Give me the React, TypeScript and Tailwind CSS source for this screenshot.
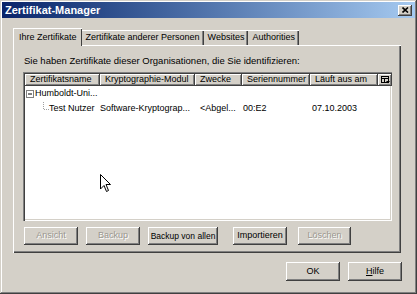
const raised =
  "shadow-[inset_-1px_-1px_0_#404040,inset_1px_1px_0_#ffffff,inset_-2px_-2px_0_#808080]";
const sunken =
  "shadow-[inset_1px_1px_0_#808080,inset_2px_2px_0_#404040,inset_-1px_-1px_0_#ffffff,inset_-2px_-2px_0_#d4d0c8]";

function Btn({ label, w, disabled, className = "" }: { label: React.ReactNode; w: string; disabled?: boolean; className?: string }) {
  return (
    <div
      className={`${w} flex items-center justify-center whitespace-nowrap bg-[#d4d0c8] ${raised} ${
        disabled ? "text-[#9a978f] [text-shadow:1px_1px_0_#ffffff]" : "text-black"
      } ${className}`}
    >
      {label}
    </div>
  );
}

function Tab({ label, active }: { label: string; active?: boolean }) {
  if (active) {
    return (
      <div className="relative z-10 h-[18px] -mb-[1px] px-[5px] flex items-center bg-[#d4d0c8] border-l border-t border-white shadow-[inset_-1px_0_0_#404040]">
        {label}
      </div>
    );
  }
  return (
    <div className="h-[15px] mt-[2px] px-[4px] flex items-center whitespace-nowrap border-t border-white shadow-[inset_-1px_0_0_#404040,inset_-2px_0_0_#808080]">
      {label}
    </div>
  );
}

const cols = [
  { label: "Zertifikatsname", w: "w-[75px]" },
  { label: "Kryptographie-Modul", w: "w-[95px]" },
  { label: "Zwecke", w: "w-[47px]" },
  { label: "Seriennummer", w: "w-[68px]" },
  { label: "Läuft aus am", w: "w-[68px]" },
];

export default function App() {
  return (
    <div className="w-[417px] h-[294px] bg-[#d4d0c8] font-['Liberation_Sans',Arial,sans-serif] text-[9px] text-black p-[2px] shadow-[inset_-1px_-1px_0_#404040,inset_1px_1px_0_#d4d0c8,inset_-2px_-2px_0_#808080,inset_2px_2px_0_#ffffff] relative overflow-hidden">
      {/* title bar */}
      <div className="h-[16px] flex items-center justify-between pl-[3px] pr-[3px] bg-gradient-to-r from-[#0a246a] to-[#a6caf0]">
        <span className="text-white font-bold text-[11px]">Zertifikat-Manager</span>
        <div className={`w-[14px] h-[11px] bg-[#d4d0c8] ${raised} flex items-center justify-center`}>
          <svg width="7" height="6" viewBox="0 0 7 6">
            <path d="M0.5 0.5 L6 5.5 M6 0.5 L0.5 5.5" stroke="#000" strokeWidth="1.6" />
          </svg>
        </div>
      </div>

      {/* tabs */}
      <div className="flex items-start mt-[10px] ml-[11px]">
        <Tab label="Ihre Zertifikate" active />
        <Tab label="Zertifikate anderer Personen" />
        <Tab label="Websites" />
        <Tab label="Authorities" />
      </div>

      {/* tab panel */}
      <div className="ml-[11px] w-[388px] h-[208px] border-l border-t border-white shadow-[inset_-1px_-1px_0_#404040,inset_-2px_-2px_0_#808080] pt-[10px] pl-[9px]">
        <div className="pl-[1px] h-[16px] leading-[10px] text-[9.5px]">
          Sie haben Zertifikate dieser Organisationen, die Sie identifizieren:
        </div>
        <div className={`w-[369px] h-[149px] bg-white p-[2px] ${sunken} relative`}>
          <div className="flex h-[12px]">
            {cols.map((c) => (
              <div
                key={c.label}
                className={`${c.w} h-[12px] shrink-0 bg-[#d4d0c8] ${raised} flex items-center pl-[5px] whitespace-nowrap overflow-hidden`}
              >
                {c.label}
              </div>
            ))}
            <div className={`w-[14px] h-[12px] shrink-0 bg-[#d4d0c8] ${raised} flex items-center justify-center`}>
              <svg width="9" height="8" viewBox="0 0 9 8">
                <rect x="0.5" y="0.5" width="7" height="6" fill="none" stroke="#000" />
                <path d="M0.5 2.5 H7.5 M3.5 2.5 V6.5" stroke="#000" />
                <path d="M5 5 H9 L7 7.5 Z" fill="#000" />
              </svg>
            </div>
          </div>
          <div className="flex items-center h-[16px] pl-[1px]">
            <svg width="8" height="8" viewBox="0 0 8 8" className="mr-[1px]">
              <rect x="0.5" y="0.5" width="7" height="7" fill="#fff" stroke="#808080" />
              <path d="M2 4 H6" stroke="#000" />
            </svg>
            <span>Humboldt-Uni...</span>
          </div>
          <div className="flex items-center h-[14px] whitespace-nowrap">
            <svg width="24" height="14" viewBox="0 0 24 14" className="shrink-0">
              <path d="M18.5 0 V7.5 H24" stroke="#a0a0a0" strokeDasharray="1 1" fill="none" />
            </svg>
            <span className="w-[51px] shrink-0">Test Nutzer</span>
            <span className="w-[100px] shrink-0">Software-Kryptograp...</span>
            <span className="w-[43px] shrink-0">&lt;Abgel...</span>
            <span className="w-[69px] shrink-0">00:E2</span>
            <span>07.10.2003</span>
          </div>
          {/* mouse cursor */}
          <svg width="12" height="19" viewBox="0 0 12 19" className="absolute left-[77px] top-[102px]">
            <path
              d="M0.5 0.5 V15 L4 11.5 L6.5 17.5 L8.5 16.5 L6 10.5 H10.5 Z"
              fill="#fff"
              stroke="#000"
              strokeWidth="1"
            />
          </svg>
        </div>
        <div className="flex mt-[6px] pl-[1px]">
          <Btn label="Ansicht" w="w-[54px] h-[18px]" disabled />
          <Btn label="Backup" w="w-[54px] h-[18px]" disabled className="ml-[8px]" />
          <Btn label="Backup von allen" w="w-[70px] h-[18px] text-[8.5px]" className="ml-[8px]" />
          <Btn label="Importieren" w="w-[54px] h-[18px]" className="ml-[15px]" />
          <Btn label="Löschen" w="w-[53px] h-[18px]" disabled className="ml-[11px]" />
        </div>
      </div>

      {/* dialog buttons */}
      <div className="flex justify-end mt-[9px] pr-[13px]">
        <Btn label="OK" w="w-[54px] h-[19px]" />
        <Btn
          label={
            <span>
              <u>H</u>ilfe
            </span>
          }
          w="w-[54px] h-[19px]"
          className="ml-[8px]"
        />
      </div>
    </div>
  );
}
